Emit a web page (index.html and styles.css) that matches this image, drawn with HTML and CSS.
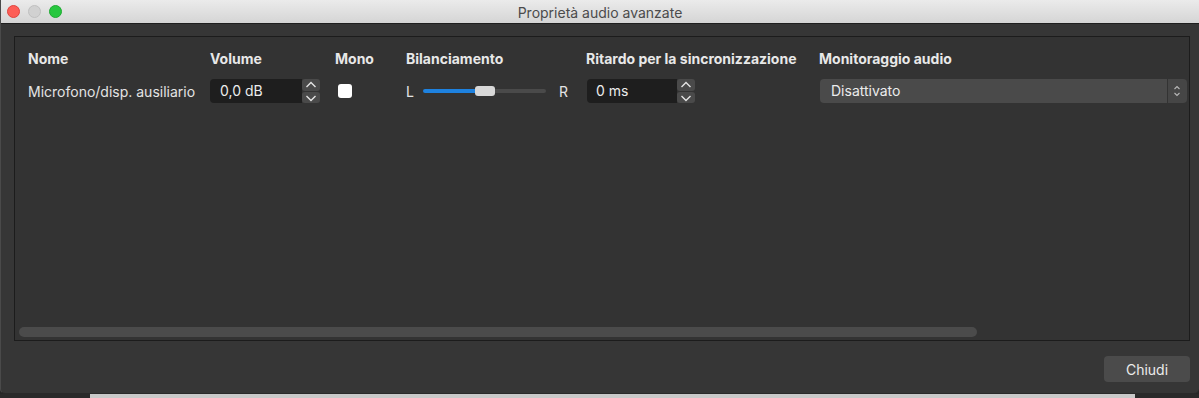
FILE: index.html
```html
<!DOCTYPE html>
<html lang="it">
<head>
<meta charset="utf-8">
<title>Proprietà audio avanzate</title>
<link rel="stylesheet" href="styles.css">
</head>
<body>
<div class="window">
  <div class="titlebar">
    <div class="lights">
      <span class="light red"></span>
      <span class="light gray"></span>
      <span class="light green"></span>
    </div>
    <div class="title">Proprietà audio avanzate</div>
  </div>
  <div class="content">
    <div class="scrollarea">
      <div class="table">
        <div class="th">Nome</div>
        <div class="th">Volume</div>
        <div class="th">Mono</div>
        <div class="th">Bilanciamento</div>
        <div class="th">Ritardo per la sincronizzazione</div>
        <div class="th">Monitoraggio audio</div>

        <div class="td">Microfono/disp. ausiliario</div>
        <div class="td">
          <div class="spin vol">
            <div class="field">0,0 dB</div>
            <div class="arrows">
              <div class="arrow"><svg width="18" height="12" viewBox="0 0 18 12"><path d="M4.5 8 L9 3.5 L13.5 8" fill="none" stroke="#e4e4e4" stroke-width="1.4"/></svg></div>
              <div class="arrow"><svg width="18" height="12" viewBox="0 0 18 12"><path d="M4.5 4 L9 8.5 L13.5 4" fill="none" stroke="#e4e4e4" stroke-width="1.4"/></svg></div>
            </div>
          </div>
        </div>
        <div class="td"><span class="check"></span></div>
        <div class="td">
          <div class="balance">
            <span class="lr">L</span>
            <div class="slider">
              <div class="fill"></div>
              <div class="handle"></div>
              <div class="rest"></div>
            </div>
            <span class="lr r">R</span>
          </div>
        </div>
        <div class="td">
          <div class="spin delay">
            <div class="field">0 ms</div>
            <div class="arrows">
              <div class="arrow"><svg width="18" height="12" viewBox="0 0 18 12"><path d="M4.5 8 L9 3.5 L13.5 8" fill="none" stroke="#e4e4e4" stroke-width="1.4"/></svg></div>
              <div class="arrow"><svg width="18" height="12" viewBox="0 0 18 12"><path d="M4.5 4 L9 8.5 L13.5 4" fill="none" stroke="#e4e4e4" stroke-width="1.4"/></svg></div>
            </div>
          </div>
        </div>
        <div class="td">
          <div class="combo">
            <div class="combo-text">Disattivato</div>
            <div class="combo-arrows">
              <svg width="18" height="24" viewBox="0 0 18 24"><path d="M6.5 10 L9 7.5 L11.5 10" fill="none" stroke="#b8b8b8" stroke-width="1.1"/><path d="M6.5 14 L9 16.5 L11.5 14" fill="none" stroke="#b8b8b8" stroke-width="1.1"/></svg>
            </div>
          </div>
        </div>
      </div>
      <div class="hscroll"></div>
    </div>
    <div class="buttons">
      <button class="btn">Chiudi</button>
    </div>
  </div>
</div>
<div class="below">
  <div class="below-left"></div>
  <div class="below-mid"></div>
  <div class="below-right"></div>
</div>
</body>
</html>
```
FILE: styles.css
```css
* { box-sizing: border-box; }
html, body {
  margin: 0;
  padding: 0;
  background: #262626;
  width: 1199px;
  height: 398px;
  overflow: hidden;
  font-family: Inter, "Liberation Sans", Arial, sans-serif;
  font-size: 14px;
  color: #e4e4e4;
}
.window {
  width: 1199px;
  height: 394px;
  background: #363636;
  border-left: 1px solid #4a4a4a;
  border-bottom: 1px solid #2a2a2a;
  border-radius: 0 0 5px 5px;
  display: flex;
  flex-direction: column;
  overflow: hidden;
}
.titlebar {
  height: 24px;
  flex: none;
  background: linear-gradient(#ebebeb, #d5d5d5);
  border-bottom: 1px solid #1f1f1f;
  display: flex;
  align-items: center;
  position: relative;
}
.lights {
  display: flex;
  gap: 8px;
  padding-left: 6px;
  position: absolute;
  left: 0;
  top: 5px;
}
.light {
  width: 13px;
  height: 13px;
  border-radius: 50%;
  display: block;
}
.red { background: #fd5e56; border: 1px solid #e0443e; }
.gray { background: #d1d1d1; border: 1px solid #c0c0c0; }
.green { background: #27c73f; border: 1px solid #1eaa31; }
.title {
  flex: 1;
  text-align: center;
  color: #4b4b4b;
  font-size: 14px;
  padding-top: 1px;
}
.content {
  flex: 1;
  display: flex;
  flex-direction: column;
  padding: 12px 9px 0 13px;
}
.scrollarea {
  height: 305px;
  border: 1px solid #1c1c1c;
  background: #333333;
  display: flex;
  flex-direction: column;
  padding: 0 0 3px 3px;
}
.table {
  display: grid;
  grid-template-columns: 182px 125px 71px 180px 233px 368px;
  grid-template-rows: 28px 24px;
  padding-left: 10px;
  padding-top: 14px;
  align-items: center;
}
.th {
  font-weight: 700;
  color: #e8e8e8;
  align-self: start;
  line-height: 16px;
}
.td { height: 24px; display: flex; align-items: center; }
.spin { display: flex; height: 24px; }
.spin .field {
  background: #1e1e1e;
  border-radius: 4px 0 0 4px;
  height: 24px;
  line-height: 24px;
  padding-left: 10px;
  color: #ececec;
  font-size: 14px;
}
.vol .field { width: 92px; }
.delay { margin-left: 1px; }
.delay .field { width: 90px; padding-left: 9px; }
.arrows {
  display: flex;
  flex-direction: column;
  width: 18px;
}
.arrow {
  height: 12px;
  background: #4a4a4a;
  border-radius: 3px;
  display: flex;
}
.arrow + .arrow { border-top: 1px solid #333; }
.check {
  width: 14px;
  height: 14px;
  background: #ffffff;
  border-radius: 3px;
  margin-left: 3px;
  display: block;
}
.balance { display: flex; align-items: center; }
.lr { width: 17px; font-size: 14px; color: #e4e4e4; }
.lr.r { width: auto; margin-left: 13px; }
.slider {
  display: flex;
  align-items: center;
  width: 123px;
  height: 10px;
}
.fill { width: 54px; height: 4px; background: #1e82e0; border-radius: 2px 0 0 2px; }
.handle { width: 20px; height: 10px; background: #d8d8d8; border-radius: 3px; margin-left: -2px; }
.rest { flex: 1; height: 4px; background: #4a4a4a; border-radius: 0 2px 2px 0; }
.combo { display: flex; height: 24px; width: 367px; margin-left: 1px; }
.combo-text {
  flex: 1;
  background: #4a4a4a;
  border-radius: 4px 0 0 4px;
  line-height: 24px;
  padding-left: 11px;
  font-size: 14px;
  color: #ececec;
}
.combo-arrows {
  width: 19px;
  margin-left: 1px;
  background: #464646;
  border-radius: 0 4px 4px 0;
  display: flex;
}
.hscroll {
  margin-top: auto;
  width: 958px;
  height: 10px;
  background: #4b4b4b;
  border-radius: 5px;
  margin-left: 1px;
}
.buttons {
  display: flex;
  justify-content: flex-end;
  padding-top: 15px;
}
.btn {
  width: 86px;
  height: 26px;
  background: #4b4b4b;
  border: none;
  border-radius: 4px;
  color: #ececec;
  font-family: Inter, "Liberation Sans", Arial, sans-serif;
  font-size: 14px;
  padding: 0;
}
.below { display: flex; height: 4px; }
.below-left { width: 90px; background: #2a2a2a; }
.below-mid { width: 1045px; background: #c9c9c9; }
.below-right { flex: 1; background: #2a2a2a; }
```
